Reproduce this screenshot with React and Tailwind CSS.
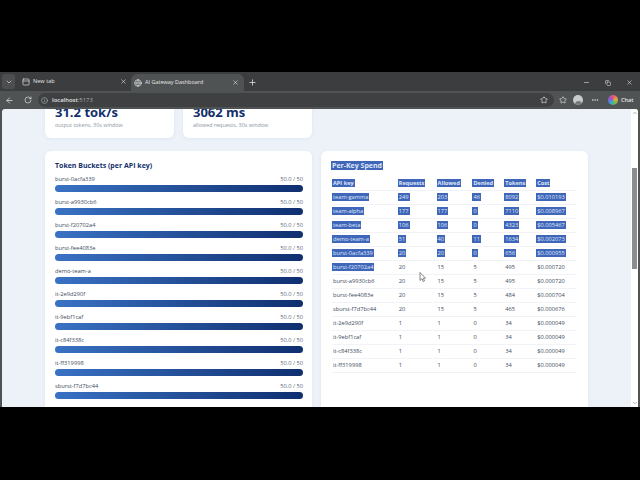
import React from "react";
import { X, Plus, ArrowLeft, RotateCw, Info, Star, ChevronDown, Minus, Copy, Globe, PanelTop, MoreHorizontal, ChevronUp } from "lucide-react";

const buckets = ["burst-0acfa339","burst-a9930cb6","burst-f20702a4","burst-fee4083e","demo-team-a","it-2e9d290f","it-9ebf1caf","it-c84f338c","it-ff319998","sburst-f7d7bc44"];
const rows = [
  ["team-gamma","249","203","46","8092","$0.010193",6],
  ["team-alpha","177","177","0","7110","$0.008967",6],
  ["team-beta","106","106","0","4323","$0.005467",6],
  ["demo-team-a","51","40","11","1634","$0.002073",6],
  ["burst-0acfa339","20","20","0","656","$0.000955",6],
  ["burst-f20702a4","20","15","5","495","$0.000720",1],
  ["burst-a9930cb6","20","15","5","495","$0.000720",0],
  ["burst-fee4083e","20","15","5","484","$0.000704",0],
  ["sburst-f7d7bc44","20","15","5","465","$0.000676",0],
  ["it-2e9d290f","1","1","0","34","$0.000049",0],
  ["it-9ebf1caf","1","1","0","34","$0.000049",0],
  ["it-c84f338c","1","1","0","34","$0.000049",0],
  ["it-ff319998","1","1","0","34","$0.000049",0],
];
const widths = ["w-[66px]","w-[39px]","w-[36px]","w-[32px]","w-[32px]","w-[40px]"];

function Sel({ on, children, className = "" }) {
  return <span className={on ? `bg-[#3f66b9] text-[#dfe8fa] px-px -mx-px ${className}` : className}>{children}</span>;
}

function Stat({ value, caption }) {
  return (
    <div className="w-[129px] h-[48px] bg-white rounded-md shadow-[0_1px_4px_rgba(30,60,120,0.06)] pl-[10px] pr-[9px] flex flex-col justify-end pb-[9px]">
      <div className="text-[13px] leading-[16px] font-bold text-[#12306b]">{value}</div>
      <div className="text-[5.4px] leading-[8px] mt-[1px] text-[#8a95a4]">{caption}</div>
    </div>
  );
}

export default function App() {
  return (
    <div className="w-[640px] h-[480px] bg-black flex flex-col overflow-hidden font-['Open_Sans','Noto_Sans',sans-serif]">
      <div className="h-[72px] shrink-0" />
      <div className="h-[19px] shrink-0 bg-[#3b3d3e] flex items-end text-[#e4e5e6]">
        <div className="w-[13px] h-[15px] ml-[2px] mb-[2px] rounded-[3px] bg-[#4c4e4f] flex items-center justify-center">
          <ChevronDown size={8} />
        </div>
        <div className="w-[115px] h-[19px] flex items-center pl-[7px] pr-[2px] text-[5.6px]">
          <PanelTop size={8} />
          <span className="ml-[3px] flex-1">New tab</span>
          <X size={7} className="mr-[1px]" />
        </div>
        <div className="w-[113px] h-[17px] ml-[1px] bg-[#505354] rounded-t-md flex items-center pl-[3px] pr-[5px] text-[5.5px]">
          <Globe size={8} />
          <span className="ml-[3px] flex-1">AI Gateway Dashboard</span>
          <X size={7} />
        </div>
        <Plus size={9} className="ml-[4px] mb-[4px]" />
        <div className="flex-1" />
        <div className="flex items-center mb-[5px] gap-[15px] mr-[7px]">
          <Minus size={7} />
          <Copy size={6} />
          <X size={7} />
        </div>
      </div>
      <div className="h-[18px] shrink-0 bg-[#505354] flex items-center text-[#e2e3e4]">
        <ArrowLeft size={9} className="ml-[5px]" />
        <RotateCw size={8} className="ml-[10px]" />
        <div className="ml-[6px] w-[516px] h-[14px] rounded-full bg-[#3e4041] flex items-center pl-[3px] pr-[4px]">
          <Info size={7} className="text-[#b9bbbc]" />
          <span className="ml-[4px] text-[5.9px] font-semibold">localhost<span className="font-normal text-[#a9abac]">:5173</span></span>
          <div className="flex-1" />
          <Star size={8} className="mr-[2px]" />
        </div>
        <Star size={8} className="ml-[5px]" />
        <div className="ml-[6px] w-[10px] h-[10px] rounded-full bg-[#c9cacb] overflow-hidden flex items-end justify-center">
          <div className="w-[7px] h-[4px] rounded-t-full bg-[#77797a]" />
        </div>
        <MoreHorizontal size={8} className="ml-[8px]" />
        <div className="ml-[9px] w-[10px] h-[10px] rounded-full bg-[conic-gradient(#e0527a,#e8a23a,#6cc04a,#3aa3e0,#8a5ad8,#e0527a)]" />
        <span className="ml-[3px] text-[5.6px] font-semibold">Chat</span>
      </div>
      <div className="h-[298px] shrink-0 bg-[#505354] pl-[2px] pr-[2px]">
        <div className="relative h-[298px] rounded-t-[3px] bg-[#edf2f9] overflow-hidden">
          <div className="pl-[43px] mt-[-19px] flex gap-[9px]">
            <Stat value="31.2 tok/s" caption="output tokens, 30s window" />
            <Stat value="3062 ms" caption="allowed requests, 30s window" />
          </div>
          <div className="pl-[43px] mt-[13px] flex gap-[9px] items-start">
            <div className="w-[267px] h-[300px] bg-white rounded-md shadow-[0_1px_4px_rgba(30,60,120,0.06)] pl-[10px] pr-[9px] pt-[10px]">
              <div className="text-[7px] leading-[10px] font-bold text-[#12306b]">Token Buckets (per API key)</div>
              {buckets.map((b) => (
                <div key={b} className="h-[23px]">
                  <div className="flex justify-between text-[5.7px] leading-[11px] pt-[3px] h-[14px] text-[#3c4a5c]">
                    <span>{b}</span>
                    <span className="text-[#5d6977]">50.0 / 50</span>
                  </div>
                  <div className="h-[7px] rounded-full bg-[linear-gradient(90deg,#3a72c4,#0f2f6f)]" />
                </div>
              ))}
            </div>
            <div className="w-[267px] h-[300px] bg-white rounded-md shadow-[0_1px_4px_rgba(30,60,120,0.06)] px-[11px] pt-[10px]">
              <div className="text-[7px] leading-[10px] font-bold text-[#12306b]"><Sel on>Per-Key Spend</Sel></div>
              <div className="mt-[5px] w-[245px]">
                <div className="flex h-[15px] items-center text-[5.6px] font-bold text-[#12306b] border-b border-[#f1f3f7] pl-[1px]">
                  {["API key","Requests","Allowed","Denied","Tokens","Cost"].map((h, i) => (
                    <div key={h} className={widths[i]}><Sel on>{h}</Sel></div>
                  ))}
                </div>
                {rows.map((r) => (
                  <div key={r[0]} className="flex h-[14px] items-center text-[5.7px] text-[#3c4a5c] border-b border-[#f1f3f7] pl-[1px]">
                    {r.slice(0, 6).map((c, i) => (
                      <div key={i} className={widths[i]}><Sel on={i < r[6]}>{c}</Sel></div>
                    ))}
                  </div>
                ))}
              </div>
            </div>
          </div>
          <svg className="absolute left-[417px] top-[163px] w-[7px] h-[10px]" viewBox="0 0 7 10">
            <path d="M1 .5v8l2-1.8 1.3 2.8 1.2-.6L4.300 6.200H6.500z" fill="#fff" stroke="#555" strokeWidth="0.7" />
          </svg>
          <div className="absolute right-0 top-0 bottom-0 w-[7px] bg-white flex flex-col items-center">
            <ChevronUp size={6} className="text-[#666] mt-[1px]" />
            <div className="w-[5px] h-[101px] mt-[52px] bg-[#8b8d8f]" />
            <div className="flex-1" />
            <ChevronDown size={6} className="text-[#666] mb-[1px]" />
          </div>
        </div>
      </div>
      <div className="flex-1" />
    </div>
  );
}
